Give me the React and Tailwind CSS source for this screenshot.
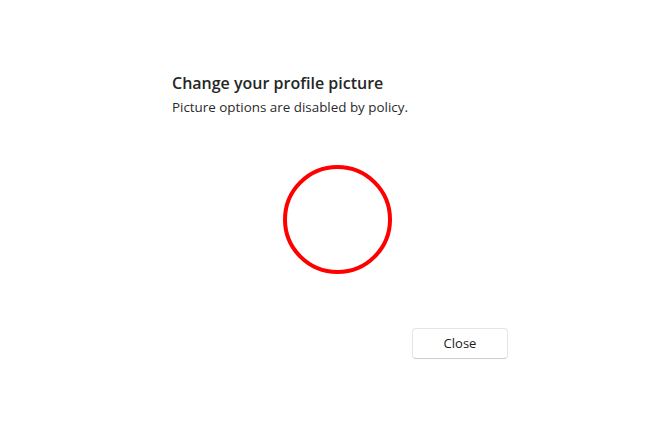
import React from 'react';

const font = { fontFamily: '"Open Sans", "Noto Sans", sans-serif' };

const ProfilePictureDialog = () => {
  return (
    <div className="w-full h-[423px] bg-white" style={font}>
      <div className="ml-[172px] w-[336px] pt-[72px] flex flex-col">
        <h2 className="text-[16px] leading-[22px] font-semibold text-[#262626]">
          Change your profile picture
        </h2>
        <p className="mt-[5px] text-[13.4px] leading-[17px] text-[#2b2b2b]">
          Picture options are disabled by policy.
        </p>
        <div className="mt-[49px] ml-[111px] w-[109px] h-[109px] rounded-full border-4 border-[#ff0000]" />
        <div className="mt-[54px] flex justify-end">
          <button className="w-[96px] h-[31px] rounded-[4px] border border-[#e5e5e5] border-b-[#cccccc] bg-white text-[13px] text-[#1b1b1b]">
            Close
          </button>
        </div>
      </div>
    </div>
  );
};

export default ProfilePictureDialog;
